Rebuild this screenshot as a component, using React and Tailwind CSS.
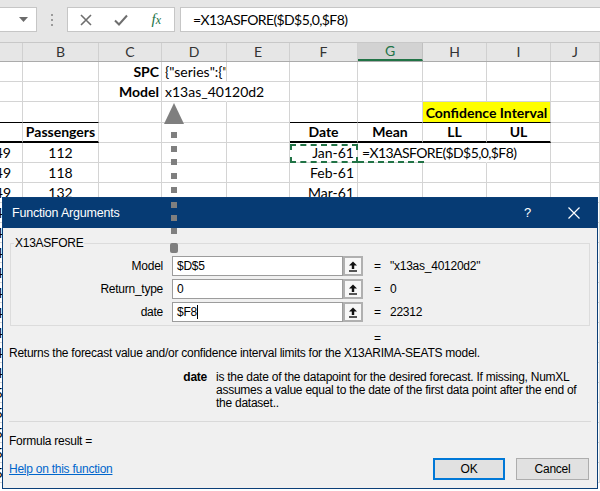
import React from "react";

const COLS = "grid grid-cols-[23px_76px_63px_65px_63px_68px_65px_64px_64px_1fr]";
const CELL = "border-r border-b border-[#d4d4d4] flex items-end pb-[1px] px-[3px] whitespace-nowrap leading-[17px] min-w-0";
const ACELL = "border-r border-b border-[#d4d4d4] flex items-end justify-end overflow-hidden pb-[1px] pr-[11px] whitespace-nowrap leading-[17px] min-w-0";

function TopBar() {
  return (
    <div className="h-[43px] bg-[#e6e6e6] flex items-start pt-[7px] border-b border-[#c8c8c8]">
      <div className="w-[37px] h-[25px] bg-white border border-l-0 border-[#c6c6c6] flex items-center justify-end pr-[8px]">
        <svg width="9" height="5" viewBox="0 0 9 5"><path d="M0 0h9L4.5 5z" fill="#6b6b6b" /></svg>
      </div>
      <div className="w-[29px] h-[25px] flex flex-col items-center justify-center gap-[3px]">
        <span className="w-[2px] h-[2px] bg-[#9a9a9a]" />
        <span className="w-[2px] h-[2px] bg-[#9a9a9a]" />
        <span className="w-[2px] h-[2px] bg-[#9a9a9a]" />
      </div>
      <div className="ml-[1px] w-[108px] h-[25px] bg-white border border-[#c6c6c6] flex items-center">
        <div className="w-[36px] flex justify-center">
          <svg width="12" height="12" viewBox="0 0 12 12"><path d="M1 1L11 11M11 1L1 11" stroke="#6e6e6e" strokeWidth="1.6" /></svg>
        </div>
        <div className="w-[36px] flex justify-center">
          <svg width="14" height="12" viewBox="0 0 14 12"><path d="M1 6.5L5 10.5L13 1.5" stroke="#6e6e6e" strokeWidth="2" fill="none" /></svg>
        </div>
        <div className="w-[36px] flex justify-center font-['Liberation_Serif',serif] italic text-[15px] text-[#217346] leading-none">
          <span>f<span className="text-[12px]">x</span></span>
        </div>
      </div>
      <div className="ml-[5px] flex-1 h-[25px] bg-white border border-r-0 border-[#c6c6c6] flex items-center pl-[12px] text-[14px] tracking-[-0.6px]">
        =X13ASFORE($D$5,0,$F8)
      </div>
    </div>
  );
}

function HeaderRow() {
  const letters = ["", "B", "C", "D", "E", "F", "G", "H", "I", "J"];
  return (
    <div className={COLS + " h-[19px] bg-[#e6e6e6] border-b border-[#ababab] text-[14px] text-[#333]"}>
      {letters.map((l, i) =>
        l === "G" ? (
          <div key={i} className="bg-[#d2d2d2] border-r border-[#c0c0c0] border-b-2 border-b-[#217346] flex items-center justify-center text-[#217346] leading-none">
            {l}
          </div>
        ) : (
          <div key={i} className="border-r border-[#d0d0d0] flex items-center justify-center leading-none">
            {l}
          </div>
        )
      )}
    </div>
  );
}

function Sheet() {
  const tail = [
    ["Apr-49", "129"], ["May-49", "121"], ["Jun-49", "135"], ["Jul-49", "148"], ["Aug-49", "148"],
    ["Sep-49", "136"], ["Oct-49", "119"], ["Nov-49", "104"], ["Dec-49", "118"], ["Jan-50", "115"],
    ["Feb-50", "126"], ["Mar-50", "141"], ["Apr-50", "135"], ["May-50", "125"],
  ];
  return (
    <div className="text-[14px]">
      <HeaderRow />
      {/* row 1 */}
      <div className={COLS + " h-[20px]"}>
        <div className={CELL} />
        <div className={CELL} />
        <div className={CELL + " justify-end pr-[2px] font-bold"}>SPC</div>
        <div className={CELL + " overflow-hidden"}>{'{"series":{"Model"'}</div>
        <div className={CELL} />
        <div className={CELL} />
        <div className={CELL} />
        <div className={CELL} />
        <div className={CELL} />
        <div className={CELL} />
      </div>
      {/* row 2 */}
      <div className={COLS + " h-[20px]"}>
        <div className={CELL} />
        <div className={CELL} />
        <div className={CELL + " justify-end pr-[2px] font-bold"}>Model</div>
        <div className={CELL + " border-r-transparent"}>x13as_40120d2</div>
        <div className={CELL} />
        <div className={CELL} />
        <div className={CELL} />
        <div className={CELL} />
        <div className={CELL} />
        <div className={CELL} />
      </div>
      {/* row 3 */}
      <div className={COLS + " h-[21px]"}>
        <div className={CELL + " border-b-black"} />
        <div className={CELL + " border-b-black"} />
        <div className={CELL} />
        <div className={CELL} />
        <div className={CELL} />
        <div className={CELL + " border-b-black"} />
        <div className={CELL + " border-b-black"} />
        <div className={CELL + " col-span-2 border-b-black bg-[#ffff00] justify-center font-bold"}>Confidence Interval</div>
        <div className={CELL} />
      </div>
      {/* row 4 */}
      <div className={COLS + " h-[20px]"}>
        <div className={CELL + " border-b-2 border-b-black"} />
        <div className={CELL + " border-b-2 border-b-black justify-center font-bold"}>Passengers</div>
        <div className={CELL} />
        <div className={CELL} />
        <div className={CELL} />
        <div className={CELL + " border-b-2 border-b-black justify-center font-bold"}>Date</div>
        <div className={CELL + " border-b-2 border-b-black justify-center font-bold"}>Mean</div>
        <div className={CELL + " border-b-2 border-b-black justify-center font-bold"}>LL</div>
        <div className={CELL + " border-b-2 border-b-black justify-center font-bold"}>UL</div>
        <div className={CELL} />
      </div>
      {/* row 5 */}
      <div className={COLS + " h-[20px]"}>
        <div className={ACELL}>Jan-49</div>
        <div className={CELL + " justify-center"}>112</div>
        <div className={CELL} />
        <div className={CELL} />
        <div className={CELL} />
        <div className={CELL + " relative justify-end"}>
          Jan-61
          <div className="absolute left-0 top-[1px] right-[-1px] bottom-[-1px] border-2 border-dashed border-[#217346]" />
        </div>
        <div className={CELL + " relative border-r-transparent z-10"}>
          <span className="pl-[1px] tracking-[-0.6px]">=X13ASFORE($D$5,0,$F8)</span>
          <div className="absolute left-0 right-[-2px] bottom-[-1px] border-b-2 border-dashed border-[#217346]" />
        </div>
        <div className={CELL + " border-r-transparent"} />
        <div className={CELL} />
        <div className={CELL} />
      </div>
      {/* row 6 */}
      <div className={COLS + " h-[20px]"}>
        <div className={ACELL}>Feb-49</div>
        <div className={CELL + " justify-center"}>118</div>
        <div className={CELL} />
        <div className={CELL} />
        <div className={CELL} />
        <div className={CELL + " justify-end"}>Feb-61</div>
        <div className={CELL} />
        <div className={CELL} />
        <div className={CELL} />
        <div className={CELL} />
      </div>
      {/* row 7 */}
      <div className={COLS + " h-[20px]"}>
        <div className={ACELL}>Mar-49</div>
        <div className={CELL + " justify-center"}>132</div>
        <div className={CELL} />
        <div className={CELL} />
        <div className={CELL} />
        <div className={CELL + " justify-end"}>Mar-61</div>
        <div className={CELL} />
        <div className={CELL} />
        <div className={CELL} />
        <div className={CELL} />
      </div>
      {tail.map(([a, b], i) => (
        <div key={i} className={COLS + " h-[20px]"}>
          <div className={ACELL}>{a}</div>
          <div className={CELL + " justify-center"}>{b}</div>
          <div className={CELL} />
          <div className={CELL} />
          <div className={CELL} />
          <div className={CELL} />
          <div className={CELL} />
          <div className={CELL} />
          <div className={CELL} />
          <div className={CELL} />
        </div>
      ))}
    </div>
  );
}

function RefButton() {
  return (
    <div className="w-[20px] h-[20px] border-2 border-[#b0b0b0] bg-[#f7f7f7] flex items-center justify-center">
      <svg width="10" height="11" viewBox="0 0 10 11">
        <path d="M5 0.5L9 4.5H6.2V8H3.8V4.5H1z" fill="#111" />
        <rect x="1" y="9.3" width="8" height="1.4" fill="#111" />
      </svg>
    </div>
  );
}

function ArgRow({ label, value, result, caret }) {
  return (
    <div className="flex items-center h-[20px]">
      <div className="w-[152px] text-right">{label}</div>
      <div className="ml-[9px] w-[171px] h-[20px] bg-white border border-[#9c9c9c] flex items-center pl-[4px]">
        <span>{value}</span>
        {caret && <span className="w-[1px] h-[14px] bg-black" />}
      </div>
      <RefButton />
      <div className="ml-[11px] w-[7px]">=</div>
      <div className="ml-[9px]">{result}</div>
    </div>
  );
}

function Dialog() {
  return (
    <div className="absolute left-[2px] top-[197px] w-[596px] h-[292px] bg-[#f0f0f0] border border-[#0b3f78] font-['Liberation_Sans',sans-serif] text-[12px] tracking-[-0.25px] text-black flex flex-col leading-[14px]">
      <div className="h-[30px] shrink-0 bg-[#063b74] flex items-center text-white">
        <span className="ml-[9px] text-[12.5px] tracking-[-0.2px]">Function Arguments</span>
        <span className="ml-auto text-[13px]">?</span>
        <svg className="ml-[37px] mr-[17px]" width="12" height="12" viewBox="0 0 12 12">
          <path d="M0.5 0.5L11.5 11.5M11.5 0.5L0.5 11.5" stroke="#fff" strokeWidth="1.2" />
        </svg>
      </div>
      <div className="relative mt-[15px] mx-[7px] h-[83px] border border-[#dcdcdc] pt-[12px] flex flex-col gap-[3px]">
        <span className="absolute left-[3px] top-[-8px] px-[1px] bg-[#f0f0f0]">X13ASFORE</span>
        <ArgRow label="Model" value="$D$5" result={'"x13as_40120d2"'} />
        <ArgRow label="Return_type" value="0" result="0" />
        <ArgRow label="date" value="$F8" result="22312" caret />
      </div>
      <div className="mt-[5px] h-[14px] pl-[371px]">=</div>
      <div className="mt-[1px] h-[14px] pl-[6px] whitespace-nowrap">
        Returns the forecast value and/or confidence interval limits for the X13ARIMA-SEATS model.
      </div>
      <div className="mt-[11px] flex leading-[13px]">
        <div className="w-[204px] text-right font-bold">date</div>
        <div className="ml-[9px] whitespace-nowrap">
          is the date of the datapoint for the desired forecast. If missing, NumXL
          <br />
          assumes a value equal to the date of the first data point after the end of
          <br />
          the dataset..
        </div>
      </div>
      <div className="mt-[11px] mx-[6px] border-t border-[#d9d9d9]" />
      <div className="mt-[12px] pl-[6px] h-[14px]">Formula result =</div>
      <div className="mt-[10px] flex items-center h-[22px]">
        <span className="ml-[6px] text-[#0066cc] underline">Help on this function</span>
        <div className="ml-auto w-[72px] h-[22px] border-2 border-[#0078d7] bg-[#e1e1e1] flex items-center justify-center">OK</div>
        <div className="ml-[11px] mr-[8px] w-[73px] h-[22px] border border-[#adadad] bg-[#e1e1e1] flex items-center justify-center">Cancel</div>
      </div>
    </div>
  );
}

function Arrow() {
  const ys = [30, 44, 57, 71, 85, 100, 113, 126];
  return (
    <svg className="absolute left-[163px] top-[102px] z-30" width="24" height="152" viewBox="0 0 24 152">
      <path d="M11 1L1 22H21z" fill="#7f7f7f" />
      {ys.map((y) => (
        <rect key={y} x="8" y={y} width="6" height="6" fill="#7f7f7f" />
      ))}
      <rect x="7" y="141" width="8" height="10" rx="2" fill="#7f7f7f" />
    </svg>
  );
}

export default function App() {
  return (
    <div className="relative w-[600px] h-[491px] overflow-hidden bg-white font-['Lato',sans-serif] text-black">
      <TopBar />
      <Sheet />
      <Dialog />
      <Arrow />
    </div>
  );
}
